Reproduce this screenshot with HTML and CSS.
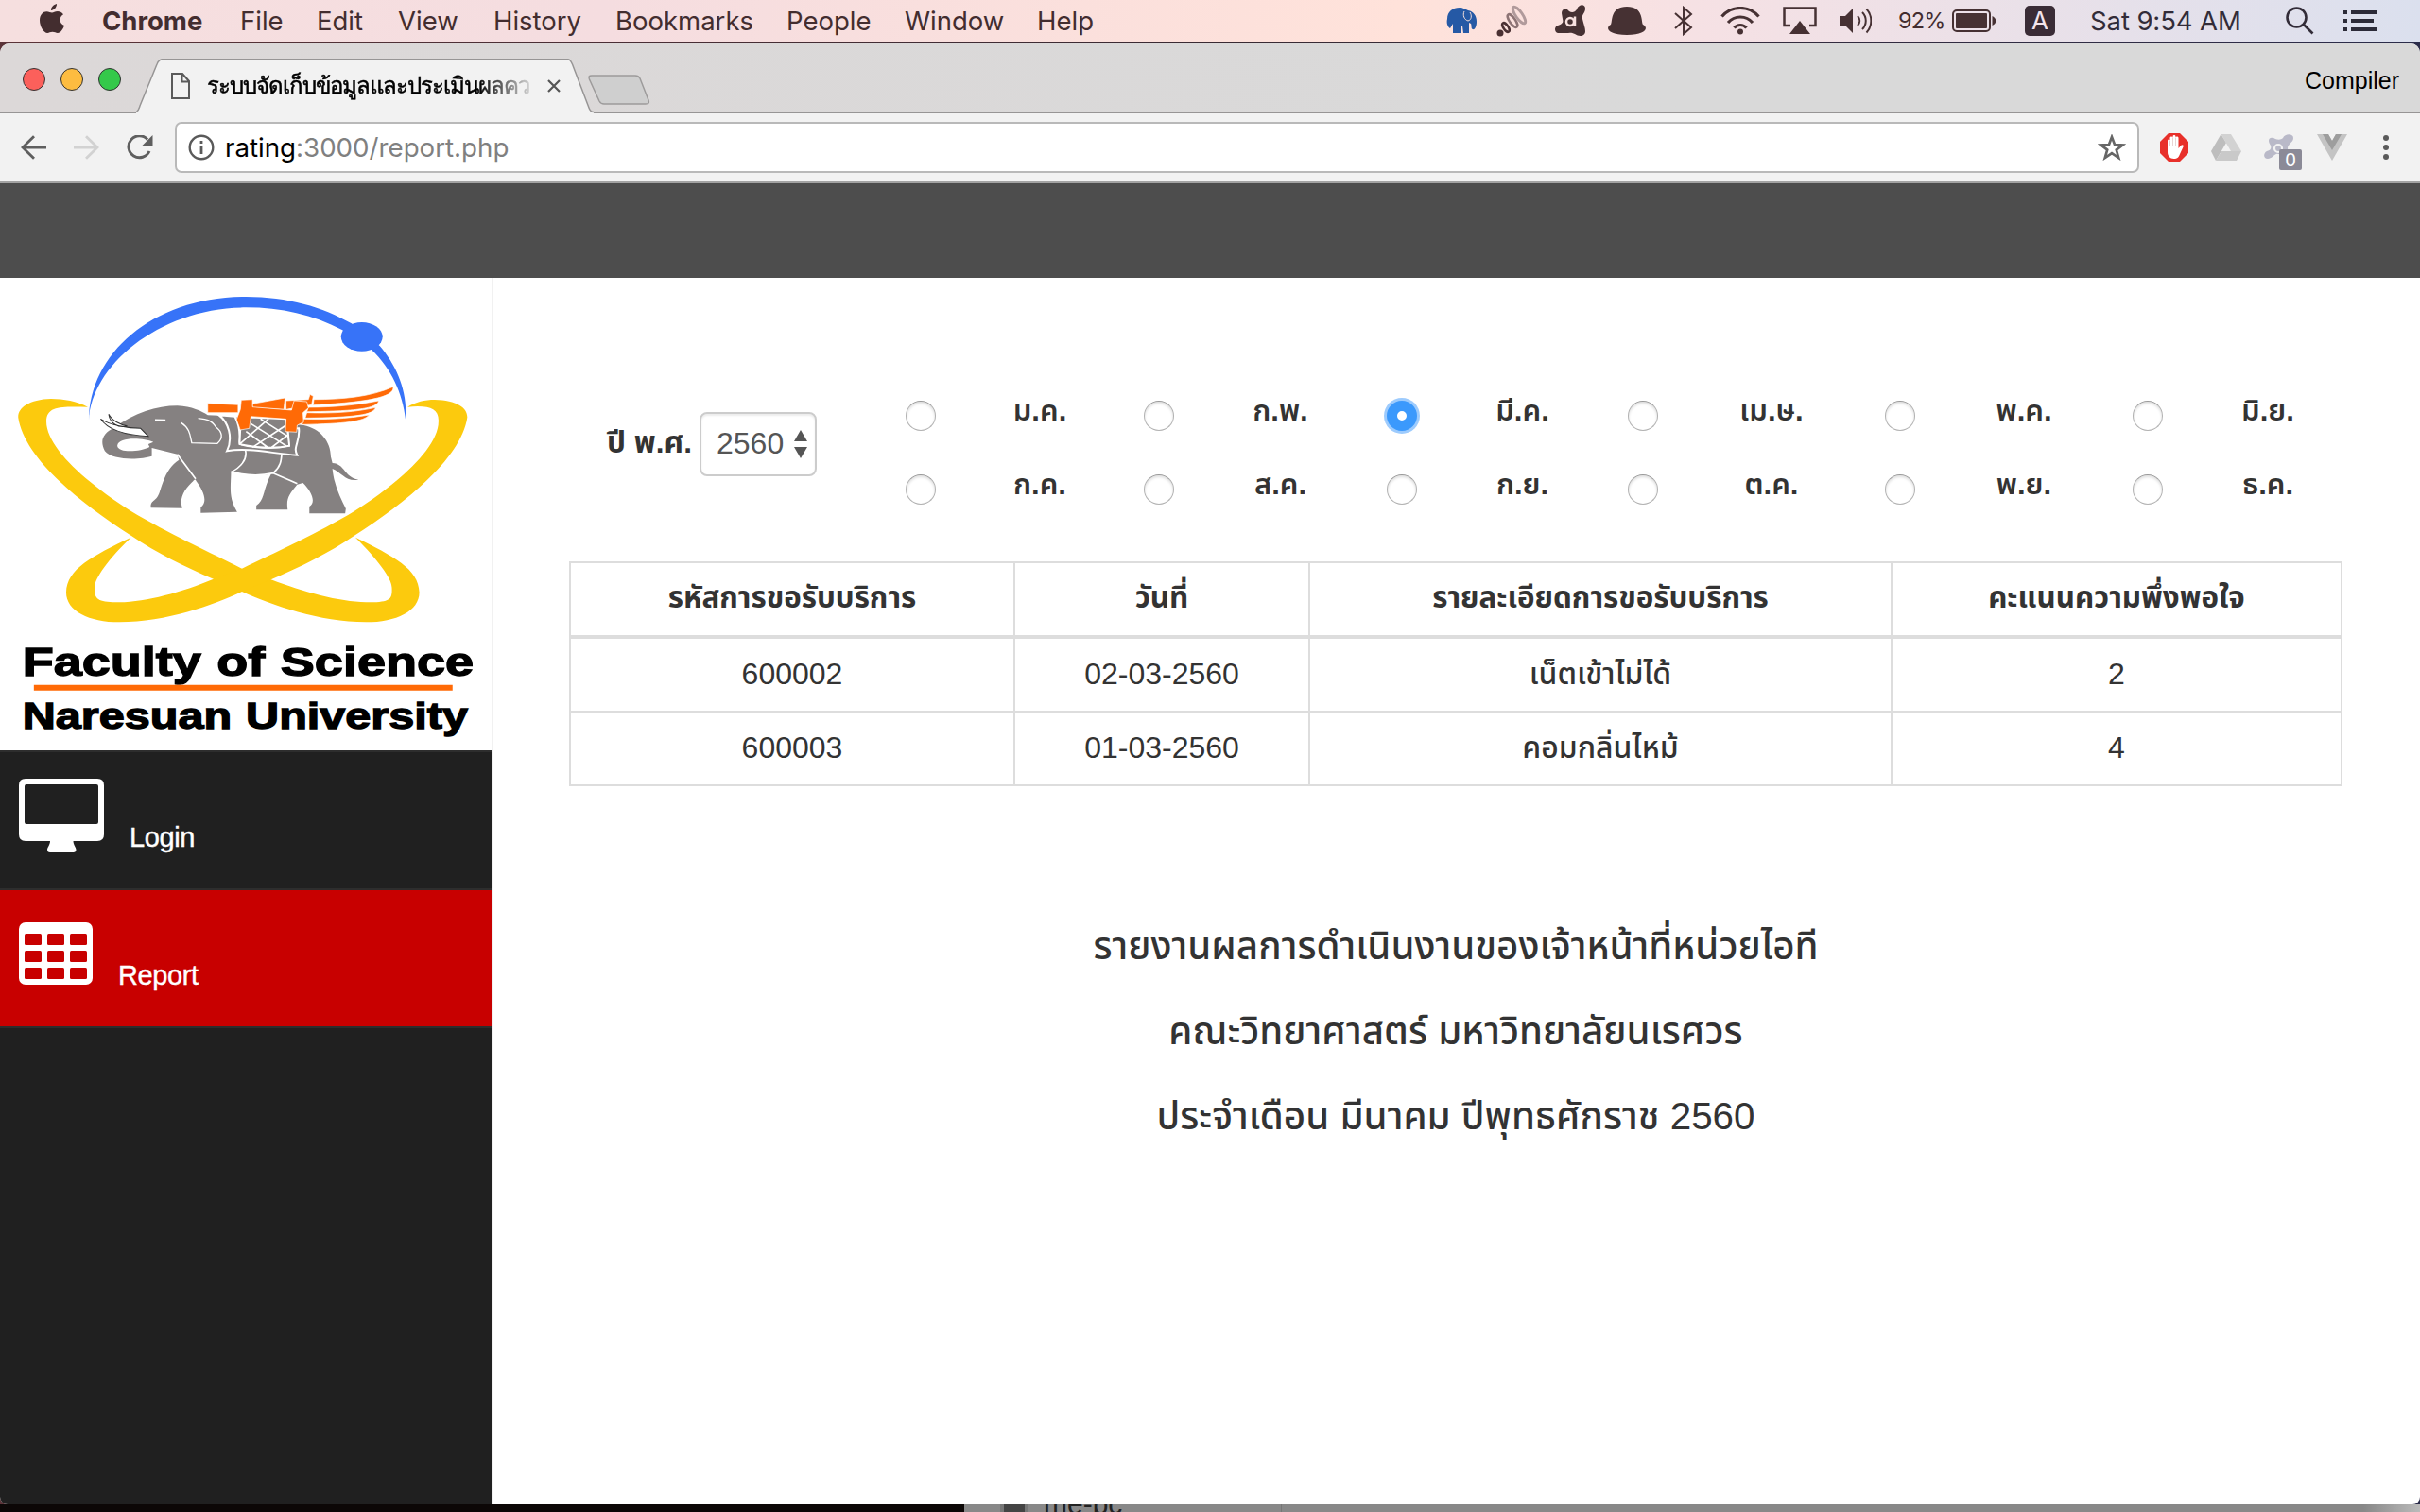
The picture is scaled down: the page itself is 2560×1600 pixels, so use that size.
FILE: index.html
```html
<!DOCTYPE html>
<html lang="th">
<head>
<meta charset="utf-8">
<title>ระบบจัดเก็บข้อมูลและประเมินผลความพึงพอใจ</title>
<link rel="stylesheet" href="styles.css">
</head>
<body>
<header class="menubar">
  <nav class="menus">
    <svg class="apple" width="26" height="32" viewBox="0 0 26 32"><path d="M18 0c.3 3-2.600 7-6 7C11.600 4 14.500.700 18 0zM13 9.500c1.500 0 3-1.500 6-1.500 2 0 4.500 1 6 3.200-5 3-4.300 9.800 1 11.800-1 3.500-4 8-7 8-2 0-3-1.200-5.500-1.200S10 31 8.200 31C4.500 31 0 24 0 17.500 0 11.500 3.600 8.200 7.300 8.200c2.500 0 4.200 1.300 5.700 1.300z"/></svg>
    <b>Chrome</b><span>File</span><span>Edit</span><span>View</span><span>History</span><span>Bookmarks</span><span>People</span><span>Window</span><span>Help</span>
  </nav>
  <div class="status">
    <svg width="32" height="28" viewBox="0 0 32 28"><path fill="#2559a5" d="M1 12C1 4 7 0 14 0c4 0 6 2 9 3 6 1 9 6 9 12 0 5-2 9-4 8-2 0-1-4-2-6l-2-1v11h-6l-1-8h-2v8H7V17l-3 5C1 20 0 16 1 12z"/><path fill="none" stroke="#f8e0da" d="M19 4c-2 4 0 9 4 10 4-1 4-6 2-9"/></svg>
    <svg width="34" height="34" viewBox="0 0 34 34" fill="none" stroke="#4a3133"><circle cx="4" cy="30" r="3.500" fill="#4a3133" stroke="none"/><ellipse cx="10" cy="24" rx="2.500" ry="5.500" stroke-width="2.500" transform="rotate(-35 10 24)"/><ellipse cx="17" cy="17" rx="3" ry="8" stroke-width="2.500" stroke="#8d7475" transform="rotate(-35 17 17)"/><ellipse cx="24" cy="11" rx="3.500" ry="10.500" stroke-width="3" stroke="#b09a9b" transform="rotate(-35 24 11)"/></svg>
    <svg width="34" height="34" viewBox="0 0 34 34"><path fill="#463133" d="M8 9c0-5 5-6 8-2 3 2 6 1 8-2 2-6 9-6 9-1 0 5-4 6-3 11 1 5 3 9 3 13 0 6-7 6-11 3-4-2-6-1-10-1H4c-4-1-4-7 0-8 5-2 6-3 5-7z"/><circle cx="17" cy="18" r="4" fill="none" stroke="#f8e2e0" stroke-width="2.500"/><path d="M22 12.500v10" stroke="#f8e2e0" stroke-width="2.500"/></svg>
    <svg width="42" height="30" viewBox="0 0 42 30"><path fill="#463133" d="M4 19C6 16 3 0 21 0s15 16 17 19c6 3 4 11-17 11S-2 22 4 19z"/></svg>
    <svg width="20" height="32" viewBox="0 0 20 32" fill="none" stroke="#463133" stroke-width="2"><path d="M1 8l17 15-8 7V2l8 7L1 24"/></svg>
    <svg width="42" height="30" viewBox="0 0 42 30" fill="none" stroke="#463133" stroke-width="3.200"><path d="M1.500 10.500C12-1.500 30-1.500 40.500 10.500M8 17c7-8 19-8 26 0M14.500 22.500c3.500-4 9.500-4 13 0"/><circle cx="21" cy="26.500" r="3" fill="#463133" stroke="none"/></svg>
    <svg width="36" height="30" viewBox="0 0 36 30"><path d="M8 20H1.500V1.500h33V20H28" fill="none" stroke="#463133" stroke-width="2.500"/><path d="M18 15l11 14H7z" fill="#463133"/></svg>
    <svg width="34" height="28" viewBox="0 0 34 28" fill="none" stroke="#463133" stroke-width="2"><path d="M0 9h6l8-8v26l-8-8H0z" fill="#463133" stroke="none"/><path d="M19 9c3 3 3 7 0 10M24 5c5 5 5 13 0 18M28.500 1.500c6.500 7 6.500 18 0 25"/></svg>
    <span class="pct">92%</span>
    <svg width="48" height="24" viewBox="0 0 48 24"><rect x="1" y="1" width="39" height="22" rx="4" fill="none" stroke="#463133" stroke-width="2"/><rect x="4" y="4" width="33" height="16" rx="1" fill="#463133"/><path d="M42.500 7c5 2 5 8 0 10z" fill="#463133"/></svg>
    <span class="lang">A</span>
    <span class="clock">Sat 9:54 AM</span>
    <svg width="30" height="30" viewBox="0 0 30 30" fill="none" stroke="#322c38" stroke-width="2.600"><circle cx="11.500" cy="11.500" r="10"/><path d="M18.500 18.500l10 10"/></svg>
    <svg width="36" height="22" viewBox="0 0 36 22" fill="#2c2b38"><path d="M0 0h4v4H0zM8 0h28v4H8zM0 9h4v4H0zM8 9h24v4H8zM0 18h4v4H0zM8 18h28v4H8z"/></svg>
  </div>
</header>

<main class="window">
  <div class="tabstrip">
    <div class="lights"><i class="red"></i><i class="amber"></i><i class="green"></i></div>
    <div class="tab">
      <svg class="tab-shape" width="484" height="58" viewBox="0 0 484 58"><path d="M0 56.500C3 55 3 53 4 50L22 6c1.500-4 3-5.500 7-5.500H455c4 0 5 2 6.500 5.500L479 52c1 3 2 4.500 5 4.500V58H0z" fill="#f2f2f2"/><path d="M0 56.500C3 55 3 53 4 50L22 6c1.500-4 3-5.500 7-5.500H455c4 0 5 2 6.500 5.500L479 52c1 3 2 4.500 5 4.500" fill="none" stroke="#979595" stroke-width="1.500"/></svg>
      <svg class="page-icon" width="20" height="28" viewBox="0 0 20 28" fill="none" stroke="#5a5a5a" stroke-width="2"><path d="M1 1h11l7 8v18H1zM11.500 1v8.500H19"/></svg>
      <span class="tab-title">ระบบจัดเก็บข้อมูลและประเมินผลคว</span>
      <svg width="14" height="14" viewBox="0 0 14 14"><path d="M1 1l12 12M13 1L1 13" stroke="#555" stroke-width="2.200"/></svg>
    </div>
    <svg class="newtab" width="66" height="32" viewBox="0 0 66 32"><path d="M4 1h46c3 0 4 1 5 3l9 23c1 3 0 4-3 4H17c-3 0-4-1-5-3L1.500 5C.500 2 1 1 4 1z" fill="#cfcfcf" stroke="#9d9b9b" stroke-width="1.500"/></svg>
    <span class="profile">Compiler</span>
  </div>

  <div class="toolbar">
    <svg width="28" height="26" viewBox="0 0 28 26" fill="none" stroke="#5f5f5f" stroke-width="2.800"><path d="M27 13H2M14 1.200L2 13l12 11.800"/></svg>
    <svg width="28" height="26" viewBox="0 0 28 26" fill="none" stroke="#d2d2d2" stroke-width="2.800"><path d="M0 13h25M13 1.200L25 13 13 24.800"/></svg>
    <svg width="28" height="26" viewBox="0 0 28 26"><path d="M24 17a11.500 11.500 0 1 1-2-12.500" fill="none" stroke="#5f5f5f" stroke-width="3"/><path d="M27.500 0v11.500H16z" fill="#5f5f5f"/></svg>
    <div class="omnibox">
      <svg width="28" height="28" viewBox="0 0 28 28"><circle cx="14" cy="14" r="12.300" fill="none" stroke="#5a5a5a" stroke-width="2.400"/><path d="M14 12v9M14 7v3" stroke="#5a5a5a" stroke-width="2.800"/></svg>
      <span class="url"><span class="host">rating</span>:3000/report.php</span>
      <svg width="30" height="28" viewBox="0 0 30 28"><path d="M15 3l3 8 8.500.400-6.700 5.200L22.200 25 15 20.200 7.800 25l2.400-8.400L3.500 11.400 12 11z" fill="none" stroke="#666" stroke-width="2.700"/></svg>
    </div>
    <div class="extensions">
      <svg width="30" height="30" viewBox="0 0 30 30"><path d="M9 0h12l9 9v12l-9 9H9l-9-9V9z" fill="#e8302a"/><path d="M8 15V8c0-2 2.500-2 2.500 0V5c0-2 3-2 3 0V3.500c0-2 3-2 3 0V5c0-2 3-2 3 0v11l2.500-3c1.500-1.500 3.500-.500 2.500 1.500L21 22c-1 3-2.500 5-6.500 5S8 24 8 20z" fill="#fff"/><path d="M10.500 8v6M13.500 5v9M16.500 5v9" stroke="#d8b8b6" stroke-width=".6"/></svg>
      <svg width="32" height="28" viewBox="0 0 32 28"><path d="M10.500 0L0 18l5 10 7-12 4-7z" fill="#bdbdbd"/><path d="M10.500 0H21l11 18H21z" fill="#d2d2d2"/><path d="M5 28l6-10h21l-5 10z" fill="#c9c9c9"/></svg>
      <div class="avast">
        <svg width="32" height="28" viewBox="0 0 32 28"><path d="M5 7c0-4 4-4 7-2 3 1 6 1 8-1 2-5 11-5 11 0s-6 6-6 11 4 8 0 9-8-4-12-3c-3 1-5 5-9 5-5 0-5-6-1-8 4-1 5-3 4-6-1-2-2-3-2-5z" fill="#b9b9c8"/><circle cx="15" cy="15" r="4" fill="none" stroke="#f2f2f2" stroke-width="2.200"/></svg>
        <span class="badge">0</span>
      </div>
      <svg width="32" height="28" viewBox="0 0 32 28"><path d="M0 0h12l4 7 4-7h12L16 28z" fill="#c4c4c4"/><path d="M6 0h6l4 7 4-7h6L16 17z" fill="#9d9d9d"/></svg>
      <svg class="dots" width="6" height="26" viewBox="0 0 6 26" fill="#5a5a5a"><circle cx="3" cy="3" r="3"/><circle cx="3" cy="13" r="3"/><circle cx="3" cy="23" r="3"/></svg>
    </div>
  </div>

  <div class="banner"></div>

  <div class="page">
    <aside class="sidebar">
      <svg class="logo" width="520" height="500" viewBox="0 12 1538 1500" preserveAspectRatio="none">
        <path fill="#3773f8" d="M278 465C280 250 480 72 770 72C900 72 1010 105 1100 157L1188 228C1240 290 1276 370 1269 462C1260 380 1225 300 1162 240L1070 177C980 130 880 106 770 106C500 106 285 290 278 465z"/>
        <ellipse cx="1132" cy="199" rx="65" ry="46" fill="#3773f8"/>
        <g fill="#fcca0d">
          <path d="M275 422C240 404 200 396 160 396C90 398 56 425 57 455C75 580 240 720 410 830C490 885 580 930 668 968L757 1008C850 1050 1000 1105 1145 1105C1240 1105 1312 1070 1312 1010C1310 935 1230 895 1112 836C1180 905 1226 965 1226 995C1228 1035 1220 1042 1145 1042C1060 1040 950 1010 848 970L757 935C650 880 560 840 430 765C300 685 145 560 145 468C145 415 200 422 275 422z"/>
          <path d="M1275 422C1300 406 1330 399 1360 399C1430 401 1463 425 1462 455C1444 580 1279 720 1109 830C1029 885 939 930 848 970L757 1008C669 1050 519 1105 374 1105C279 1105 207 1070 207 1010C209 935 289 895 410 836C339 905 296 965 296 995C294 1035 310 1042 374 1042C459 1040 569 1010 668 968L757 935C869 880 959 840 1089 765C1219 685 1372 560 1372 468C1374 425 1340 416 1275 422z"/>
        </g>
        <path fill="#858181" d="M358 488C420 440 490 418 555 418C600 420 630 435 650 448L700 450L950 480C1000 490 1035 530 1035 580L1040 600C1080 602 1075 645 1122 653C1080 660 1070 630 1040 618C1045 670 1065 710 1082 745L1080 760L968 760L968 738C990 725 975 690 948 663L930 668C905 700 895 710 900 748L802 748L802 735C830 715 820 690 848 635C810 640 770 638 723 628C722 680 715 710 742 755L628 758L628 740C650 725 640 690 610 652C580 680 560 705 570 743L472 742C470 715 490 725 500 690C515 640 530 610 560 590L555 572L475 552L475 578C440 590 350 592 328 562C312 530 320 505 358 488z"/>
        <path fill="#fff" d="M480 533C450 520 370 515 367 545C370 570 440 564 468 549L464 540z"/>
        <path fill="#fff" stroke="#333" stroke-width="3" d="M315 460C345 480 400 490 440 490L464 515C400 512 340 500 315 460zM340 445C350 465 375 478 398 482C370 490 345 475 340 445z"/>
        <g fill="none" stroke="#fff" stroke-width="5">
          <path stroke-width="4" d="M567 472C595 490 595 515 600 536L680 538C700 520 695 500 675 485C660 460 640 460 620 458"/>
          <path d="M485 463L518 464M555 572L612 650M768 560C775 590 750 615 725 628C770 640 820 640 855 632C880 610 880 590 882 565M855 632L930 665"/>
        </g>
        <path fill="#858181" stroke="#fff" stroke-width="6" d="M685 448L735 452C760 500 745 530 750 540C810 555 860 555 905 545L900 490L935 490C940 530 915 550 930 575C850 570 780 550 710 562C730 520 715 470 685 448z"/>
        <path fill="#858181" stroke="#fff" stroke-width="5" d="M785 455L895 460L905 545C860 555 800 550 750 540L752 495zM785 475L895 545M770 500L840 552M815 460L900 515M750 540L840 460M790 550L895 480M850 550L902 510"/>
        <g fill="#ff6a06" stroke="#fff" stroke-width="2">
          <path d="M982 398C1070 398 1160 390 1230 358C1235 385 1180 405 980 416zM965 423C1050 423 1120 415 1185 402C1180 425 1130 435 960 437zM960 440C1050 443 1110 438 1175 424C1170 447 1110 455 955 457zM950 460C1020 462 1080 460 1155 447C1140 468 1080 475 945 478z"/>
          <path d="M650 410L745 415L745 440L650 440zM790 412L892 393L888 430L790 424zM895 402L965 398L970 382L980 388L975 415L895 430z"/>
          <path d="M755 400L790 398L790 422L912 432L920 402L960 405L965 425L948 440L950 470L930 480L928 502L893 500L895 460L785 452L780 490L752 495L740 462L752 430z"/>
        </g>
        <g class="logo-text">
          <text x="70" y="1274" font-size="129" textLength="1412" lengthAdjust="spacingAndGlyphs">Faculty of Science</text>
          <text x="70" y="1443" font-size="118" textLength="1394" lengthAdjust="spacingAndGlyphs">Naresuan University</text>
        </g>
        <path fill="#ff6a06" d="M106 1304h1310v18H106z"/>
      </svg>
      <ul class="nav">
        <li><svg width="90" height="78" viewBox="0 0 90 78"><path fill="#fff" fill-rule="evenodd" d="M7 0h76q7 0 7 7v52q0 7-7 7H57.500c0 4 3 7 3 9q0 3-3 3H33q-3 0-3-3c0-2 3-5 3-9H7q-7 0-7-7V7q0-7 7-7zM6 8v38q0 2 2 2h74q2 0 2-2V8q0-2-2-2H8q-2 0-2 2z"/></svg><span>Login</span></li>
        <li class="active"><svg width="78" height="66" viewBox="0 0 78 66"><rect width="78" height="66" rx="7" fill="#fff"/><g fill="#c80000"><rect x="6" y="12" width="18" height="12" rx="1.500"/><rect x="30" y="12" width="18" height="12" rx="1.500"/><rect x="54" y="12" width="18" height="12" rx="1.500"/><rect x="6" y="30" width="18" height="12" rx="1.500"/><rect x="30" y="30" width="18" height="12" rx="1.500"/><rect x="54" y="30" width="18" height="12" rx="1.500"/><rect x="6" y="48" width="18" height="12" rx="1.500"/><rect x="30" y="48" width="18" height="12" rx="1.500"/><rect x="54" y="48" width="18" height="12" rx="1.500"/></g></svg><span>Report</span></li>
      </ul>
    </aside>

    <section class="content">
      <form class="filters">
        <label class="year">ปี พ.ศ.</label>
        <div class="select"><span>2560</span><svg width="14" height="30" viewBox="0 0 14 30" fill="#555"><path d="M7 0l7 12H0zM7 30l7-12H0z"/></svg></div>
        <div class="months">
          <label><i></i><span>ม.ค.</span></label><label><i></i><span>ก.พ.</span></label><label><i class="on"></i><span>มี.ค.</span></label><label><i></i><span>เม.ษ.</span></label><label><i></i><span>พ.ค.</span></label><label><i></i><span>มิ.ย.</span></label>
          <label><i></i><span>ก.ค.</span></label><label><i></i><span>ส.ค.</span></label><label><i></i><span>ก.ย.</span></label><label><i></i><span>ต.ค.</span></label><label><i></i><span>พ.ย.</span></label><label><i></i><span>ธ.ค.</span></label>
        </div>
      </form>

      <table class="report">
        <colgroup><col class="c1"><col class="c2"><col class="c3"><col class="c4"></colgroup>
        <thead><tr><th>รหัสการขอรับบริการ</th><th>วันที่</th><th>รายละเอียดการขอรับบริการ</th><th>คะแนนความพึ่งพอใจ</th></tr></thead>
        <tbody>
          <tr><td>600002</td><td>02-03-2560</td><td>เน็ตเข้าไม่ได้</td><td>2</td></tr>
          <tr><td>600003</td><td>01-03-2560</td><td>คอมกลิ่นไหม้</td><td>4</td></tr>
        </tbody>
      </table>

      <div class="summary">
        <p>รายงานผลการดำเนินงานของเจ้าหน้าที่หน่วยไอที</p>
        <p>คณะวิทยาศาสตร์ มหาวิทยาลัยนเรศวร</p>
        <p>ประจำเดือน มีนาคม ปีพุทธศักราช 2560</p>
      </div>
    </section>
  </div>
</main>

<footer class="desktop">
  <div class="wood"></div>
  <div class="finder"><i></i><span>me-pc</span></div>
  <div class="finder-rest"></div>
</footer>
</body>
</html>
```
FILE: styles.css
```css
* { box-sizing: border-box; }
body {
  margin: 0; width: 2560px; height: 1600px; overflow: hidden;
  display: flex; flex-direction: column;
  background: linear-gradient(90deg, #5a3338, #3a2a33 50%, #2b2c4a);
  font-family: "Liberation Sans", "Noto Sans Thai", "Noto Sans", sans-serif; color: #333;
}
svg { display: block; flex: none; }

/* system menu bar */
.menubar {
  height: 44px; flex: none; display: flex; justify-content: space-between; align-items: center;
  background: linear-gradient(90deg, #f6dfdf 0, #f5dde0 25%, #ffe2da 58%, #f6e1e4 70%, #dbe0ee 100%);
  font-family: Inter, sans-serif; font-size: 27.5px; line-height: 44px; color: #432d2f;
}
.menus { display: grid; grid-template-columns: 66px 146px 81px 86px 101px 129px 181px 125px 140px 80px; padding-left: 42px; align-items: center; }
.menus span, .menus b { white-space: nowrap; }
.apple { fill: #432d2f; margin-top: -4px; }
.status { display: grid; grid-template-columns: 53px 61px 56px 71px 49px 66px 60px 62px 57px 77px 69px 207px 61px 81px; align-items: center; width: 1030px; }
.pct { font-size: 23.5px; letter-spacing: -.8px; }
.lang { width: 32px; height: 32px; border-radius: 5px; background: #3a2c36; color: #f3e4ec; text-align: center; line-height: 32px; font-size: 26px; }
.clock { color: #322c38; white-space: nowrap; letter-spacing: -.1px; }

/* browser window */
.window { margin-top: 2px; height: 1546px; flex: none; display: flex; flex-direction: column; border-radius: 10px 10px 8px 8px; overflow: hidden; background: #fff; }
.tabstrip { height: 74px; flex: none; display: flex; align-items: flex-start; background: linear-gradient(#979595, #979595) 0 100% / 100% 1px no-repeat, linear-gradient(90deg, #dcd8d8, #d9d9d9 70%); }
.lights { display: flex; gap: 16px; padding: 26px 0 0 24px; width: 144px; }
.lights i { width: 24px; height: 24px; border-radius: 50%; border: 1px solid; }
.red { background: #fc605b; border-color: #de4743; }
.amber { background: #fdbc40; border-color: #dd9f33; }
.green { background: #34c94a; border-color: #27a935; }
.tab { position: relative; margin-top: 16px; width: 484px; height: 58px; display: flex; align-items: center; padding-left: 37px; }
.tab-shape { position: absolute; left: 0; top: 0; }
.tab > :not(.tab-shape) { position: relative; }
.tab-title { margin: 0 10px 0 18px; width: 350px; white-space: nowrap; font: 500 24px/58px "Liberation Sans", sans-serif; color: #000; letter-spacing: -1px; -webkit-text-stroke: .5px #000; -webkit-mask-image: linear-gradient(90deg, #000 82%, transparent 100%); mask-image: linear-gradient(90deg, #000 82%, transparent 100%); }
.newtab { margin: 33px 0 0 -6px; }
.profile { margin-left: auto; padding: 19px 22px 0 0; font-size: 25px; line-height: 40px; color: #000; }

.toolbar { height: 74px; flex: none; display: flex; align-items: center; padding: 0 32px 0 22px; background: #f2f2f2; border-bottom: 2px solid #a3a3a3; }
.toolbar > svg { margin-right: 28px; }
.toolbar > svg:nth-of-type(3) { margin-right: 23px; }
.omnibox { width: 2078px; height: 54px; display: flex; align-items: center; padding: 0 12px; background: #fff; border: 2px solid #b9b9b9; border-radius: 7px; }
.url { flex: 1; margin-left: 11px; font: 27.7px/50px Inter, sans-serif; color: #808080; }
.host { color: #000; }
.extensions { flex: 1; display: flex; align-items: center; margin-left: 22px; }
.extensions > * { margin-right: 24px; }
.extensions > .dots { margin: 0 0 0 14px; }
.avast { position: relative; }
.badge { position: absolute; left: 16px; top: 16px; width: 24px; height: 22px; border-radius: 2px; background: #8b8a97; color: #fff; font-size: 20px; line-height: 23px; text-align: center; }

.banner { height: 100px; flex: none; background: #4d4d4d; }
.page { flex: 1; display: flex; min-height: 0; }

/* sidebar */
.sidebar { width: 520px; flex: none; background: #202020; }
.logo { background: #fff; }
.logo-text { font-family: "Liberation Sans", sans-serif; font-weight: bold; fill: #000; stroke: #000; stroke-width: 4px; word-spacing: .22em; }
.nav { margin: 0; padding: 0; list-style: none; border-bottom: 2px solid #2d2d2d; }
.nav li { display: flex; align-items: flex-start; height: 146px; border-top: 2px solid #2d2d2d; padding: 28px 0 0 20px; color: #fff; font-size: 29px; line-height: 32px; letter-spacing: -.4px; }
.nav li.active { background: #c80000; padding-top: 34px; }
.nav span { margin: 46px 0 0 27px; -webkit-text-stroke: .4px #fff; }
.nav .active span { margin-top: 40px; }

/* content */
.content { flex: 1; min-width: 0; border-left: 2px solid #f1f1f1; padding: 107px 82px 0 80px; }
.filters { display: flex; height: 193px; font-size: 32px; }
.year { width: 138px; flex: none; padding: 47px 8px 0 0; text-align: right; font-size: 31.5px; font-weight: 700; line-height: 40px; white-space: nowrap; }
.select { width: 124px; height: 68px; flex: none; margin-top: 35px; border: 2px solid #ccc; border-radius: 8px; display: flex; align-items: center; justify-content: space-between; padding: 0 8px 0 16px; color: #555; box-shadow: inset 0 2px 2px rgba(0,0,0,.075); }
.select span { line-height: 62px; margin-top: -2px; }
.months { display: grid; grid-template-columns: 252px 257px 255px 272px 262px 254px; grid-template-rows: 78px 78px; margin-left: 94px; }
.months label { display: flex; align-items: flex-start; padding-top: 23px; }
.months i { width: 32px; height: 32px; flex: none; border-radius: 50%; background: #fff; border: 1.500px solid #b2b2b2; border-top-color: #999; box-shadow: inset 0 2px 3px rgba(0,0,0,.13); }
.months i.on { border: 11px solid #3b99fc; background: #fff; box-shadow: 0 0 0 3px #9dcbfd; }
.months span { flex: 1; margin-top: -1px; text-align: center; font-weight: 600; font-size: 31px; line-height: 24px; }

.report { width: 1876px; table-layout: fixed; border-collapse: collapse; text-align: center; font-size: 32px; line-height: 44px; }
.report th, .report td { height: 79px; border: 2px solid #ddd; padding: 0 0 2px; }
.report tr:last-child td { height: 78px; }
.report td { font-weight: 500; }
.report thead th { border-bottom-width: 4px; font-size: 31.3px; font-weight: 700; }
.c1 { width: 470px; } .c2 { width: 312px; } .c3 { width: 616px; } .c4 { width: 476px; }

.summary { padding-top: 125px; text-align: center; font-size: 40.3px; font-weight: 500; }
.summary p { margin: 0; line-height: 90px; }

/* what shows below the window */
.desktop { height: 8px; flex: none; display: flex; overflow: hidden; }
.wood { width: 1020px; background: #0c0706; }
.finder { width: 336px; display: flex; background: #888; border-right: 1px solid #777; padding-left: 38px; }
.finder i { width: 30px; height: 8px; background: #444; border: 4px solid #777; border-width: 0 4px; }
.finder span { margin: -12px 0 0 16px; font-size: 30px; line-height: 24px; color: #222; }
.finder-rest { flex: 1; background: linear-gradient(90deg, #888 95%, #bbb); }
```
